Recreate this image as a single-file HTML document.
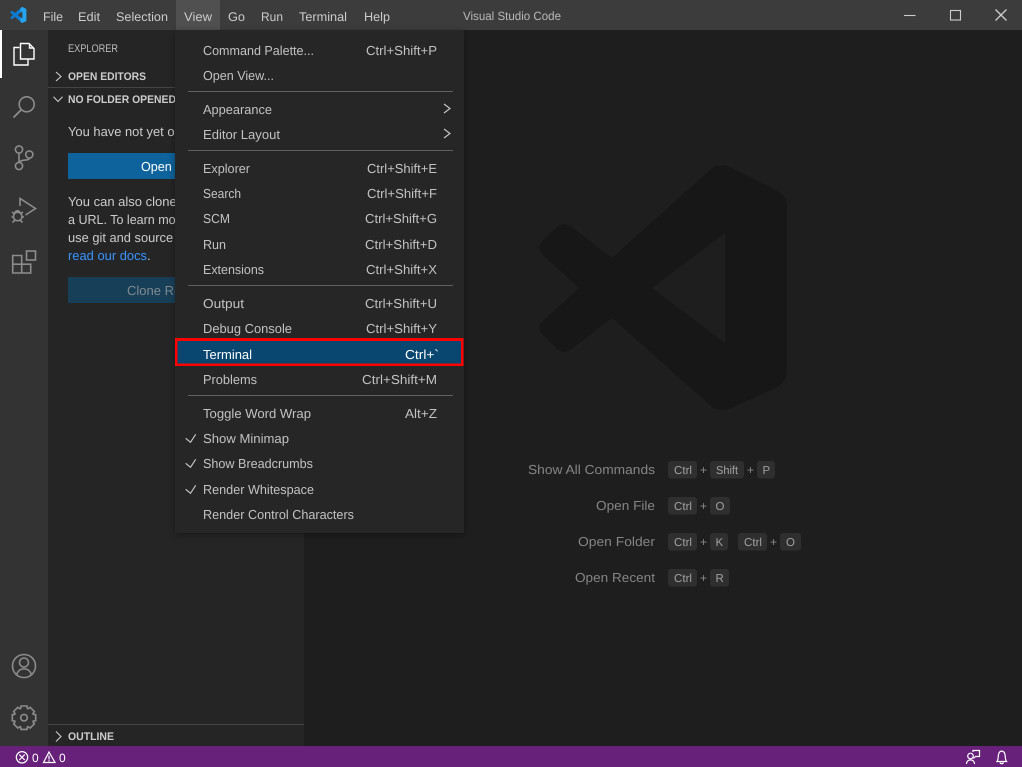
<!DOCTYPE html>
<html><head><meta charset="utf-8"><title>Visual Studio Code</title>
<style>
html,body{margin:0;padding:0;background:#1e1e1e;overflow:hidden}
svg{display:block}
text{font-family:"Liberation Sans",sans-serif;font-size:13px;fill:#ccc;text-rendering:geometricPrecision}
.m{fill:#c2c2c2}
.t{font-size:12.5px;fill:#ccc}
.b{font-weight:bold;font-size:11px;fill:#ccc}
.k{font-size:11.5px;fill:#a0a0a0;text-anchor:start}
.p{font-size:12px;fill:#8a8a8a}
.l{fill:#858585}
.i{fill:none;stroke:#8c8c8c;stroke-width:1.6}
.w{fill:none;stroke:#fff;stroke-width:1.4}
.c{fill:none;stroke:#ccc;stroke-width:1.1}
.sep{fill:#606060}
.cap{fill:#2f2f2f}
.capb{fill:#262626}
</style></head><body>
<svg width="1022" height="767" viewBox="0 0 1022 767" xmlns="http://www.w3.org/2000/svg">
<defs>
<linearGradient id="g" x1="0" x2="1" y1="0" y2="0"><stop offset="0" stop-color="#0c7bd0"/><stop offset=".62" stop-color="#0c7bd0"/><stop offset=".63" stop-color="#25a5ef"/><stop offset="1" stop-color="#25a5ef"/></linearGradient>
<filter id="sh" x="-10%" y="-10%" width="120%" height="120%"><feDropShadow dx="0" dy="2" stdDeviation="4" flood-color="#000" flood-opacity=".36"/></filter>
<path id="vs" fill-rule="evenodd" d="M711 169C717 164 725 164 731 168L776 190C783 193 787 199 787 206V371C787 378 783 384 776 388L731 408C725 411 717 411 711 406L612 318L573 348C567 353 561 353 556 348L543 335C538 330 538 325 543 321L579 288L543 255C538 250 538 245 543 240L556 228C561 223 567 223 573 228L612 258ZM725 233L652 288L725 343Z"/>
</defs>

<rect width="1022" height="767" fill="#1e1e1e"/>
<use href="#vs" fill="#171717"/>

<!-- title bar -->
<rect width="1022" height="30" fill="#3c3c3c"/>
<rect x="176" width="44" height="30" fill="#505050"/>
<g transform="translate(-24.6,-3.7) scale(.0648)"><use href="#vs" fill="url(#g)"/></g>
<text class="t" x="43" y="21" textLength="20" lengthAdjust="spacingAndGlyphs">File</text>
<text class="t" x="78" y="21" textLength="22" lengthAdjust="spacingAndGlyphs">Edit</text>
<text class="t" x="116" y="21" textLength="52" lengthAdjust="spacingAndGlyphs">Selection</text>
<text class="t" x="184" y="21" textLength="28" lengthAdjust="spacingAndGlyphs">View</text>
<text class="t" x="228" y="21" textLength="17" lengthAdjust="spacingAndGlyphs">Go</text>
<text class="t" x="261" y="21" textLength="22" lengthAdjust="spacingAndGlyphs">Run</text>
<text class="t" x="299" y="21" textLength="48" lengthAdjust="spacingAndGlyphs">Terminal</text>
<text class="t" x="364" y="21" textLength="26" lengthAdjust="spacingAndGlyphs">Help</text>
<text class="t" x="463" y="20" textLength="98" lengthAdjust="spacingAndGlyphs" style="font-size:12px;fill:#b8b8b8">Visual Studio Code</text>
<path class="c" d="M904 15.500H915.500"/>
<rect class="c" x="950.500" y="10.500" width="10" height="9.500"/>
<path class="c" style="stroke-width:1.3" d="M995.500 9.500L1006.500 20.500M1006.500 9.500L995.500 20.500"/>

<!-- activity bar -->
<rect y="30" width="48" height="716" fill="#333"/>
<rect y="30" width="2" height="48" fill="#fff"/>
<path class="w" d="M19.500 47.500H14V65H28V59.500"/>
<path class="w" d="M20.500 43.500H29L34 48.500V59H20.500Z"/>
<path class="w" d="M29.500 43.500V48H34"/>
<g class="i">
<circle cx="26.700" cy="104.300" r="7.500"/><path style="stroke-width:1.900" d="M21 110L13.500 117.500"/>
<circle cx="19" cy="149.500" r="3.600"/><circle cx="19" cy="166" r="3.600"/><circle cx="29.300" cy="154.500" r="3.600"/>
<path d="M19 153V162.400M29.300 158.100C29.300 161.500 20 158.500 20 162.800"/>
<path d="M20 206V198.500L35.500 208.500L25.500 215"/>
<circle cx="17.700" cy="216.500" r="4.300"/><path d="M12 212L15 214M23 212L20 214M11.500 217H14M21 217H24M12.500 222.500L15 220M22.500 222.500L20 220M15 213C15 210 20 210 20 213"/>
<rect x="26.500" y="251" width="9" height="9"/><path d="M12.700 255.500H21.700V273H12.700ZM12.700 264.200H30.700V273H21.700V255.500"/>
<circle cx="24" cy="666" r="11.500"/><circle cx="24" cy="662.500" r="4.500"/><path d="M16.500 675.500C18 666.500 30 666.500 31.500 675.500"/>
<circle cx="24" cy="717.700" r="3.300"/>
<g transform="translate(24,717.700)">
<path d="M8.600 -3.500L11.700 -3V3L8.600 3.500"/>
<path transform="rotate(45)" d="M8.600 -3.500L11.700 -3V3L8.600 3.500"/>
<path transform="rotate(90)" d="M8.600 -3.500L11.700 -3V3L8.600 3.500"/>
<path transform="rotate(135)" d="M8.600 -3.500L11.700 -3V3L8.600 3.500"/>
<path transform="rotate(180)" d="M8.600 -3.500L11.700 -3V3L8.600 3.500"/>
<path transform="rotate(225)" d="M8.600 -3.500L11.700 -3V3L8.600 3.500"/>
<path transform="rotate(270)" d="M8.600 -3.500L11.700 -3V3L8.600 3.500"/>
<path transform="rotate(315)" d="M8.600 -3.500L11.700 -3V3L8.600 3.500"/>
</g>
</g>

<!-- sidebar -->
<rect x="48" y="30" width="256" height="716" fill="#252526"/>
<text x="68" y="52" textLength="50" lengthAdjust="spacingAndGlyphs" style="font-size:11px;fill:#bbb">EXPLORER</text>
<path class="c" d="M56 72L61 76.500L56 81"/>
<text class="b" x="68" y="80" textLength="78" lengthAdjust="spacingAndGlyphs">OPEN EDITORS</text>
<rect x="48" y="87" width="256" height="1" fill="#444"/>
<path class="c" d="M53.500 96.800L58 101.500L62.500 96.800"/>
<text class="b" x="68" y="103" textLength="108" lengthAdjust="spacingAndGlyphs">NO FOLDER OPENED</text>
<text x="68" y="136" textLength="192" lengthAdjust="spacingAndGlyphs">You have not yet opened a folder.</text>
<rect x="68" y="153" width="216" height="26" fill="#0e639c"/>
<text x="141" y="171" textLength="70" lengthAdjust="spacingAndGlyphs" style="fill:#fff">Open Folder</text>
<text x="68" y="206" textLength="210" lengthAdjust="spacingAndGlyphs">You can also clone a repository from</text>
<text x="68" y="224" textLength="180" lengthAdjust="spacingAndGlyphs">a URL. To learn more about how</text>
<text x="68" y="242" textLength="216" lengthAdjust="spacingAndGlyphs">use git and source control in VS Code</text>
<text x="68" y="260" textLength="79" lengthAdjust="spacingAndGlyphs" style="fill:#3794ff">read our docs</text>
<text x="147" y="260">.</text>
<rect x="68" y="277" width="216" height="26" fill="#183f58"/>
<text x="127" y="295" textLength="100" lengthAdjust="spacingAndGlyphs" style="fill:#7f8a91">Clone Repository</text>
<rect x="48" y="724" width="256" height="1" fill="#444"/>
<path class="c" d="M56 731.500L61 736.500L56 741.500"/>
<text class="b" x="68" y="740" textLength="46" lengthAdjust="spacingAndGlyphs">OUTLINE</text>

<!-- status bar -->
<rect y="746" width="1022" height="21" fill="#68217a"/>
<g fill="none" stroke="#fff" stroke-width="1.200">
<circle cx="22" cy="757.300" r="5.700"/><path d="M19.300 754.600L24.700 760M24.700 754.600L19.300 760"/>
<path d="M49 752L55 762.500H43.500Z"/><path d="M49 755.500V759.500M49 760.300V761.500"/>
<path d="M973 752V750.500H979.500V756.500H976M976 756L973.500 758.500"/>
<circle cx="970.500" cy="756" r="2.800"/><path d="M966.500 764C966.500 758.500 974.500 758.500 974.500 764"/>
<path d="M997 761.500H1006.500C1005 759.500 1005.500 757 1005 754.500C1004 750 999.500 750 998.500 754.500C998 757 998.500 759.500 997 761.500ZM1000 762.500C1000.500 764 1003 764 1003.500 762.500"/>
</g>
<text x="32" y="762" style="font-size:12px;fill:#fff">0</text>
<text x="59" y="762" style="font-size:12px;fill:#fff">0</text>

<!-- watermark shortcuts -->
<text class="l" x="528" y="474" textLength="127" lengthAdjust="spacingAndGlyphs">Show All Commands</text>
<text class="l" x="596" y="510" textLength="59" lengthAdjust="spacingAndGlyphs">Open File</text>
<text class="l" x="578" y="546" textLength="77" lengthAdjust="spacingAndGlyphs">Open Folder</text>
<text class="l" x="575" y="582" textLength="80" lengthAdjust="spacingAndGlyphs">Open Recent</text>

<g>
<rect class="capb" x="668" y="461" width="29" height="18" rx="3"/><rect class="cap" x="668" y="461" width="29" height="17" rx="3"/>
<rect class="capb" x="710" y="461" width="34" height="18" rx="3"/><rect class="cap" x="710" y="461" width="34" height="17" rx="3"/>
<rect class="capb" x="757" y="461" width="18" height="18" rx="3"/><rect class="cap" x="757" y="461" width="18" height="17" rx="3"/>
<rect class="capb" x="668" y="497" width="29" height="18" rx="3"/><rect class="cap" x="668" y="497" width="29" height="17" rx="3"/>
<rect class="capb" x="710" y="497" width="20" height="18" rx="3"/><rect class="cap" x="710" y="497" width="20" height="17" rx="3"/>
<rect class="capb" x="668" y="533" width="29" height="18" rx="3"/><rect class="cap" x="668" y="533" width="29" height="17" rx="3"/>
<rect class="capb" x="710" y="533" width="18" height="18" rx="3"/><rect class="cap" x="710" y="533" width="18" height="17" rx="3"/>
<rect class="capb" x="738" y="533" width="29" height="18" rx="3"/><rect class="cap" x="738" y="533" width="29" height="17" rx="3"/>
<rect class="capb" x="780" y="533" width="21" height="18" rx="3"/><rect class="cap" x="780" y="533" width="21" height="17" rx="3"/>
<rect class="capb" x="668" y="569" width="29" height="18" rx="3"/><rect class="cap" x="668" y="569" width="29" height="17" rx="3"/>
<rect class="capb" x="710" y="569" width="19" height="18" rx="3"/><rect class="cap" x="710" y="569" width="19" height="17" rx="3"/>
</g>
<text class="k" x="674" y="474" textLength="18" lengthAdjust="spacingAndGlyphs">Ctrl</text>
<text class="p" x="700" y="474">+</text>
<text class="k" x="716" y="474" textLength="22" lengthAdjust="spacingAndGlyphs">Shift</text>
<text class="p" x="747" y="474">+</text>
<text class="k" x="762.500" y="474">P</text>
<text class="k" x="674" y="510" textLength="18" lengthAdjust="spacingAndGlyphs">Ctrl</text>
<text class="p" x="700" y="510">+</text>
<text class="k" x="715.500" y="510">O</text>
<text class="k" x="674" y="546" textLength="18" lengthAdjust="spacingAndGlyphs">Ctrl</text>
<text class="p" x="700" y="546">+</text>
<text class="k" x="715.500" y="546">K</text>
<text class="k" x="744" y="546" textLength="18" lengthAdjust="spacingAndGlyphs">Ctrl</text>
<text class="p" x="770" y="546">+</text>
<text class="k" x="786" y="546">O</text>
<text class="k" x="674" y="582" textLength="18" lengthAdjust="spacingAndGlyphs">Ctrl</text>
<text class="p" x="700" y="582">+</text>
<text class="k" x="715.500" y="582">R</text>

<!-- menu -->
<rect x="175" y="30" width="289" height="503" fill="#252526" filter="url(#sh)"/>
<rect class="sep" x="188" y="91" width="265" height="1"/>
<rect class="sep" x="188" y="150" width="265" height="1"/>
<rect class="sep" x="188" y="285" width="265" height="1"/>
<rect class="sep" x="188" y="395" width="265" height="1"/>
<rect x="175" y="338" width="288.500" height="28" fill="#f00"/>
<rect x="177.500" y="341" width="283.500" height="22.500" fill="#094771"/>

<text class="m" x="203" y="55" textLength="111" lengthAdjust="spacingAndGlyphs">Command Palette...</text>
<text class="m" x="366" y="55" textLength="71" lengthAdjust="spacingAndGlyphs">Ctrl+Shift+P</text>
<text class="m" x="203" y="80" textLength="71" lengthAdjust="spacingAndGlyphs">Open View...</text>
<text class="m" x="203" y="114" textLength="69" lengthAdjust="spacingAndGlyphs">Appearance</text>
<text class="m" x="203" y="139" textLength="77" lengthAdjust="spacingAndGlyphs">Editor Layout</text>
<path class="c" d="M444 104L450 108.500L444 113M444 129L450 133.500L444 138"/>
<text class="m" x="203" y="173" textLength="47" lengthAdjust="spacingAndGlyphs">Explorer</text>
<text class="m" x="367" y="173" textLength="70" lengthAdjust="spacingAndGlyphs">Ctrl+Shift+E</text>
<text class="m" x="203" y="198" textLength="38" lengthAdjust="spacingAndGlyphs">Search</text>
<text class="m" x="367" y="198" textLength="70" lengthAdjust="spacingAndGlyphs">Ctrl+Shift+F</text>
<text class="m" x="203" y="223" textLength="27" lengthAdjust="spacingAndGlyphs">SCM</text>
<text class="m" x="365" y="223" textLength="72" lengthAdjust="spacingAndGlyphs">Ctrl+Shift+G</text>
<text class="m" x="203" y="249" textLength="23" lengthAdjust="spacingAndGlyphs">Run</text>
<text class="m" x="365" y="249" textLength="72" lengthAdjust="spacingAndGlyphs">Ctrl+Shift+D</text>
<text class="m" x="203" y="274" textLength="61" lengthAdjust="spacingAndGlyphs">Extensions</text>
<text class="m" x="366" y="274" textLength="71" lengthAdjust="spacingAndGlyphs">Ctrl+Shift+X</text>
<text class="m" x="203" y="308" textLength="41" lengthAdjust="spacingAndGlyphs">Output</text>
<text class="m" x="365" y="308" textLength="72" lengthAdjust="spacingAndGlyphs">Ctrl+Shift+U</text>
<text class="m" x="203" y="333" textLength="89" lengthAdjust="spacingAndGlyphs">Debug Console</text>
<text class="m" x="366" y="333" textLength="71" lengthAdjust="spacingAndGlyphs">Ctrl+Shift+Y</text>
<text x="203" y="359" textLength="49" lengthAdjust="spacingAndGlyphs" style="fill:#fff">Terminal</text>
<text x="405" y="359" textLength="34" lengthAdjust="spacingAndGlyphs" style="fill:#fff">Ctrl+`</text>
<text class="m" x="203" y="384" textLength="54" lengthAdjust="spacingAndGlyphs">Problems</text>
<text class="m" x="362" y="384" textLength="75" lengthAdjust="spacingAndGlyphs">Ctrl+Shift+M</text>
<text class="m" x="203" y="418" textLength="108" lengthAdjust="spacingAndGlyphs">Toggle Word Wrap</text>
<text class="m" x="405" y="418" textLength="32" lengthAdjust="spacingAndGlyphs">Alt+Z</text>
<path class="c" d="M185.700 438.300L190.500 442.300L195.700 434.300M185.700 463.300L190.500 467.300L195.700 459.300M185.700 489.300L190.500 493.300L195.700 485.300"/>
<text class="m" x="203" y="443" textLength="86" lengthAdjust="spacingAndGlyphs">Show Minimap</text>
<text class="m" x="203" y="468" textLength="110" lengthAdjust="spacingAndGlyphs">Show Breadcrumbs</text>
<text class="m" x="203" y="494" textLength="111" lengthAdjust="spacingAndGlyphs">Render Whitespace</text>
<text class="m" x="203" y="519" textLength="151" lengthAdjust="spacingAndGlyphs">Render Control Characters</text>
</svg>
</body></html>
